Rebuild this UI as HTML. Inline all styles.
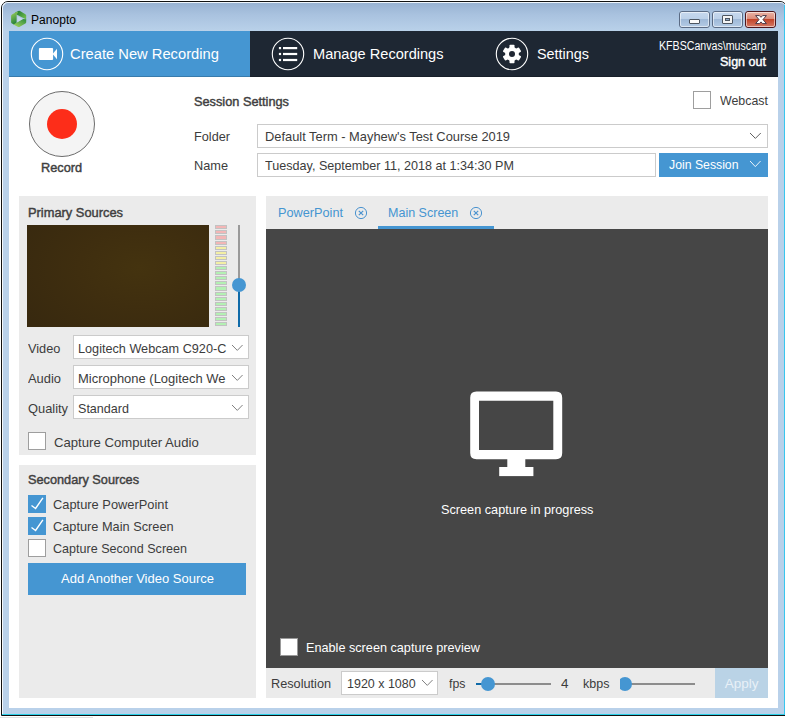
<!DOCTYPE html>
<html>
<head>
<meta charset="utf-8">
<title>Panopto</title>
<style>
html,body{margin:0;padding:0;}
body{width:785px;height:718px;overflow:hidden;background:#fff;position:relative;font-family:"Liberation Sans",sans-serif;}
.a{position:absolute;box-sizing:border-box;}
.t{position:absolute;white-space:nowrap;line-height:1;transform-origin:0 50%;font-family:"Liberation Sans",sans-serif;}
/* window frame */
#frame{left:1px;top:1px;width:786px;height:715px;border:1px solid #111;border-radius:7px 7px 0 0;background:#b9d1ea;}
#frameL{left:2px;top:8px;width:1px;height:706px;background:#f4f8fc;}
#navsh{left:9px;top:76px;width:769px;height:1px;background:rgba(0,0,0,.18);}
.b2{border-color:#b4b4b4;}
#frameglow{left:2px;top:2px;width:784px;height:30px;border-radius:6px 6px 0 0;background:linear-gradient(#98b2d2 0%,#a9c2df 40%,#bad2ea 100%);border-top:1px solid #eef4fb;border-left:1px solid #eef4fb;}
#cyan{left:2px;top:714px;width:783px;height:1px;background:#2ad0e8;}
#cyanR{left:783.7px;top:5px;width:1.3px;height:710px;background:#38c6ee;}
#content{left:9px;top:31px;width:769px;height:677px;background:#fff;}
#under{left:0;top:716px;width:785px;height:2px;background:#fff;}
#under2{left:0;top:716.5px;width:93px;height:1.5px;background:#e2e2e2;}
/* nav */
#nav{left:9px;top:31px;width:769px;height:46px;background:#1e2733;}
#navact{left:9px;top:31px;width:241px;height:46px;background:#4596d2;}
.circ{border:1.5px solid #fff;border-radius:50%;width:33px;height:33px;}
/* panels */
.panel{background:#ebebeb;}
.box{background:#fff;border:1px solid #cbcbcb;}
.cb{background:#fff;border:1px solid #9e9e9e;width:18px;height:18px;}
.cbc{background:#4596d2;border:1px solid #4596d2;width:18px;height:18px;}
.btn{background:#4596d2;}

.wb{width:31px;height:17px;border-radius:3px;border:1px solid #5b6b84;}
.wbi{position:absolute;left:0;top:0;right:0;bottom:0;border-radius:2px;border:1px solid rgba(255,255,255,.55);}
.wbn{background:linear-gradient(#c6d8ee 0%,#bcd0e8 47%,#9fb9d8 50%,#b4cbe5 100%);}
.wbc{border-color:#4e161c;background:linear-gradient(#eab3a5 0%,#dc8b79 47%,#c2452a 50%,#d47a66 100%);}
#ttl{left:31.0px;top:14.00px;font-size:12px;font-weight:400;color:#000;letter-spacing:0.047px}
#n1{left:70.4px;top:45.85px;font-size:15.3px;font-weight:400;color:#fff;letter-spacing:0.000px;transform:scaleX(0.9622)}
#n2{left:312.5px;top:45.85px;font-size:15.3px;font-weight:400;color:#fff;letter-spacing:0.000px;transform:scaleX(0.9532)}
#n3{left:537.0px;top:45.85px;font-size:15.3px;font-weight:400;color:#fff;letter-spacing:0.000px;transform:scaleX(0.9406)}
#usr{left:659.0px;top:40.00px;font-size:12px;font-weight:400;color:#fff;letter-spacing:0.000px;transform:scaleX(0.8856)}
#so{left:720.0px;top:55.00px;font-size:13px;font-weight:400;color:#fff;letter-spacing:0.000px;-webkit-text-stroke:0.45px #fff;transform:scaleX(0.9643)}
#rec{left:41.3px;top:160.75px;font-size:13.5px;font-weight:400;color:#404040;letter-spacing:0.000px;-webkit-text-stroke:0.45px #404040;transform:scaleX(0.9441)}
#ss{left:194.0px;top:94.75px;font-size:13.5px;font-weight:400;color:#404040;letter-spacing:0.000px;-webkit-text-stroke:0.45px #404040;transform:scaleX(0.9447)}
#fo{left:194.0px;top:129.75px;font-size:13.5px;font-weight:400;color:#3c3c3c;letter-spacing:0.000px;transform:scaleX(0.9408)}
#na{left:194.0px;top:158.75px;font-size:13.5px;font-weight:400;color:#3c3c3c;letter-spacing:0.000px;transform:scaleX(0.9440)}
#fov{left:265.0px;top:129.75px;font-size:13.5px;font-weight:400;color:#3c3c3c;letter-spacing:0.000px;transform:scaleX(0.9526)}
#nmv{left:265.0px;top:158.75px;font-size:13.5px;font-weight:400;color:#3c3c3c;letter-spacing:0.000px;transform:scaleX(0.9329)}
#wc{left:720.0px;top:93.75px;font-size:13.5px;font-weight:400;color:#3c3c3c;letter-spacing:0.000px;transform:scaleX(0.9181)}
#js{left:669.0px;top:157.75px;font-size:13.5px;font-weight:400;color:#fff;letter-spacing:0.000px;transform:scaleX(0.9079)}
#ps{left:28.0px;top:205.75px;font-size:13.5px;font-weight:400;color:#404040;letter-spacing:0.000px;-webkit-text-stroke:0.45px #404040;transform:scaleX(0.9521)}
#vi{left:28.4px;top:341.75px;font-size:13.5px;font-weight:400;color:#3c3c3c;letter-spacing:0.000px;transform:scaleX(0.9447)}
#au{left:28.4px;top:371.75px;font-size:13.5px;font-weight:400;color:#3c3c3c;letter-spacing:0.000px;transform:scaleX(0.9557)}
#qu{left:28.4px;top:401.75px;font-size:13.5px;font-weight:400;color:#3c3c3c;letter-spacing:0.000px;transform:scaleX(0.9517)}
#viv{left:78.0px;top:341.75px;font-size:13.5px;font-weight:400;color:#3c3c3c;letter-spacing:0.000px;transform:scaleX(0.9381)}
#auv{left:78.0px;top:371.75px;font-size:13.5px;font-weight:400;color:#3c3c3c;letter-spacing:0.000px;transform:scaleX(0.9603)}
#quv{left:78.0px;top:401.75px;font-size:13.5px;font-weight:400;color:#3c3c3c;letter-spacing:0.000px;transform:scaleX(0.9307)}
#cca{left:53.5px;top:435.75px;font-size:13.5px;font-weight:400;color:#3c3c3c;letter-spacing:0.000px;transform:scaleX(0.9738)}
#sec{left:28.0px;top:472.75px;font-size:13.5px;font-weight:400;color:#404040;letter-spacing:0.000px;-webkit-text-stroke:0.45px #404040;transform:scaleX(0.9421)}
#c1{left:53.4px;top:497.75px;font-size:13.5px;font-weight:400;color:#3c3c3c;letter-spacing:0.000px;transform:scaleX(0.9526)}
#c2{left:53.4px;top:519.75px;font-size:13.5px;font-weight:400;color:#3c3c3c;letter-spacing:0.000px;transform:scaleX(0.9453)}
#c3{left:53.4px;top:541.75px;font-size:13.5px;font-weight:400;color:#3c3c3c;letter-spacing:0.000px;transform:scaleX(0.9300)}
#add{left:60.5px;top:571.75px;font-size:13.5px;font-weight:400;color:#fff;letter-spacing:0.000px;transform:scaleX(0.9630)}
#t1{left:278.0px;top:205.75px;font-size:13.5px;font-weight:400;color:#4595d1;letter-spacing:0.000px;transform:scaleX(0.9414)}
#t2{left:388.4px;top:205.75px;font-size:13.5px;font-weight:400;color:#4595d1;letter-spacing:0.000px;transform:scaleX(0.9275)}
#scp{left:440.6px;top:502.75px;font-size:13.5px;font-weight:400;color:#fff;letter-spacing:0.000px;transform:scaleX(0.9402)}
#esc{left:305.5px;top:640.75px;font-size:13.5px;font-weight:400;color:#fff;letter-spacing:0.000px;transform:scaleX(0.9382)}
#res{left:270.7px;top:676.75px;font-size:13.5px;font-weight:400;color:#3c3c3c;letter-spacing:0.000px;transform:scaleX(0.9421)}
#rsv{left:347.0px;top:676.75px;font-size:13.5px;font-weight:400;color:#3c3c3c;letter-spacing:0.000px;transform:scaleX(0.9243)}
#fps{left:449.0px;top:676.75px;font-size:13.5px;font-weight:400;color:#3c3c3c;letter-spacing:0.000px;transform:scaleX(0.9103)}
#f4{left:560.5px;top:676.75px;font-size:13.5px;font-weight:400;color:#3c3c3c;letter-spacing:0.000px;transform:scaleX(0.9979)}
#kb{left:583.2px;top:676.75px;font-size:13.5px;font-weight:400;color:#3c3c3c;letter-spacing:0.000px;transform:scaleX(0.9253)}
#ap{left:724.8px;top:676.75px;font-size:13.5px;font-weight:400;color:#e8f0f7;letter-spacing:0.005px}
</style>
</head>
<body>
<div class="a" id="under"></div>
<div class="a" id="under2"></div>
<div class="a" id="frame"></div>
<div class="a" id="frameglow"></div>
<div class="a" id="cyan"></div>
<div class="a" id="cyanR"></div>
<div class="a" id="content"></div>
<div class="a" id="nav"></div>
<div class="a" id="navact"></div>
<div class="a" id="navsh"></div>
<div class="a" id="frameL"></div>

<!-- record -->
<div class="a" style="left:29px;top:91px;width:66px;height:66px;border-radius:50%;border:1.7px solid #6c6c6c;background:#f4f4f4"></div>
<div class="a" style="left:47px;top:109px;width:30px;height:30px;border-radius:50%;background:#fd2d19"></div>

<!-- session settings -->
<div class="a cb" style="left:693px;top:91px"></div>
<div class="a box" style="left:257px;top:124px;width:511px;height:23.5px"></div>
<div class="a box" style="left:257px;top:153px;width:399px;height:24px"></div>
<div class="a btn" style="left:659px;top:153px;width:109px;height:24px"></div>

<!-- primary sources -->
<div class="a panel" style="left:19px;top:196px;width:237px;height:259px"></div>
<div class="a" style="left:27px;top:225px;width:182px;height:102px;background:radial-gradient(ellipse 75% 85% at 62% 42%,#44330f 0%,#3f2e0f 45%,#38290f 100%)"></div>
<div class="a box b2" style="left:73px;top:335px;width:176px;height:24px"></div>
<div class="a box b2" style="left:73px;top:365px;width:176px;height:24px"></div>
<div class="a box b2" style="left:73px;top:395px;width:176px;height:24px"></div>
<div class="a cb" style="left:28px;top:432px"></div>

<!-- secondary sources -->
<div class="a panel" style="left:19px;top:465px;width:237px;height:233px"></div>
<div class="a cbc" style="left:28px;top:495px"></div>
<div class="a cbc" style="left:28px;top:517px"></div>
<div class="a cb" style="left:28px;top:539px"></div>
<div class="a btn" style="left:28px;top:563px;width:218px;height:32px"></div>

<!-- right panel -->
<div class="a panel" style="left:266px;top:196px;width:502px;height:502px"></div>
<div class="a" style="left:266px;top:229px;width:502px;height:439px;background:#464646"></div>
<div class="a" style="left:378px;top:226px;width:116px;height:3px;background:#4596d2"></div>
<div class="a" style="left:280px;top:638px;width:18px;height:18px;background:#fff;border:1px solid #999"></div>
<div class="a box b2" style="left:341px;top:671px;width:97px;height:24px"></div>
<div class="a" style="left:715px;top:668px;width:53px;height:30px;background:#bad3e6"></div>

<!--DETAIL-->
<svg class="a" style="left:10px;top:10px" width="18" height="18" viewBox="10 10 18 18">
<defs>
<linearGradient id="lg1" x1="0" y1="0" x2="1" y2="0.6"><stop offset="0" stop-color="#15702f"/><stop offset="1" stop-color="#6ab84a"/></linearGradient>
<linearGradient id="lg2" x1="0" y1="0" x2="0.3" y2="1"><stop offset="0" stop-color="#9ed05a"/><stop offset="1" stop-color="#23803a"/></linearGradient>
<linearGradient id="lg3" x1="0" y1="1" x2="1" y2="0"><stop offset="0" stop-color="#a8d860"/><stop offset="1" stop-color="#2c8a3e"/></linearGradient>
</defs>
<path d="M15.2 12.6 L18.4 10.9 Q19.2 10.6 20 11 L25.4 14.2 Q26.2 14.8 26.2 15.6 L26.2 19.6 L16.6 14.4 Z" fill="url(#lg1)"/>
<path d="M16.8 11.8 L12 14.4 Q11.1 15 11.1 15.9 L11.1 22 Q11.1 23 12 23.5 L14.6 25 L16.6 22.6 L16.6 14.6 L18.2 12.4 Z" fill="url(#lg2)"/>
<path d="M13.4 24.4 L18.2 26.9 Q19 27.2 19.8 26.8 L25.4 23.6 Q26.2 23 26.2 22.2 L26.2 19.2 L23 19 L16.6 22.8 Z" fill="url(#lg3)"/>
<path d="M17.4 16 L22.8 19 L17.4 22 Z" fill="#c4d8ea"/>
</svg>
<div class="a wb wbn" style="left:679px;top:11px"><div class="wbi"></div></div><div class="a wb wbn" style="left:712px;top:11px"><div class="wbi"></div></div><div class="a wb wbc" style="left:745px;top:11px"><div class="wbi"></div></div>
<div class="a" style="left:689px;top:19px;width:11px;height:5px;background:#fafafa;border:1px solid #4d5560;border-radius:1px"></div>
<div class="a" style="left:722px;top:15px;width:11px;height:9px;background:#f4f4f4;border:1px solid #4d5560;border-radius:1px"></div>
<div class="a" style="left:725px;top:18px;width:5px;height:3px;background:#8fa9c8;border:1px solid #4d5560"></div>
<svg class="a" style="left:753px;top:13px" width="16" height="13" viewBox="0 0 16 13">
<path d="M2.6 2.6 L6.4 2.6 L8 4.3 L9.6 2.6 L13.4 2.6 L10 6.6 L13.4 10.6 L9.6 10.6 L8 8.9 L6.4 10.6 L2.6 10.6 L6 6.6 Z" fill="#fff" stroke="#4a3a48" stroke-width="1" stroke-linejoin="round"/>
</svg>
<svg class="a" style="left:30px;top:37px" width="34" height="34" viewBox="0 0 34 34">
<circle cx="17" cy="17" r="15.7" fill="none" stroke="#fff" stroke-width="1.1"/>
<rect x="8.9" y="10.9" width="14.2" height="12.2" rx="1" fill="#fff"/>
<path d="M22.6 17 L27 11.7 L27 22.3 Z" fill="#fff"/>
</svg>
<svg class="a" style="left:271px;top:37px" width="34" height="34" viewBox="0 0 34 34">
<circle cx="17" cy="17" r="15.7" fill="none" stroke="#fff" stroke-width="1.1"/>
<g fill="#fff">
<rect x="7.9" y="10" width="2.2" height="2.2"/><rect x="12" y="10" width="14.2" height="2.2"/>
<rect x="7.9" y="15.9" width="2.2" height="2.2"/><rect x="12" y="15.9" width="14.2" height="2.2"/>
<rect x="7.9" y="21.9" width="2.2" height="2.2"/><rect x="12" y="21.9" width="14.2" height="2.2"/>
</g></svg>
<svg class="a" style="left:495px;top:37px" width="34" height="34" viewBox="0 0 34 34">
<circle cx="17" cy="17" r="15.7" fill="none" stroke="#fff" stroke-width="1.1"/>
<g transform="translate(17 17)" fill="#fff"><rect x="-2.5" y="-9.3" width="5" height="5" rx="0.8" transform="rotate(0)"/><rect x="-2.5" y="-9.3" width="5" height="5" rx="0.8" transform="rotate(60)"/><rect x="-2.5" y="-9.3" width="5" height="5" rx="0.8" transform="rotate(120)"/><rect x="-2.5" y="-9.3" width="5" height="5" rx="0.8" transform="rotate(180)"/><rect x="-2.5" y="-9.3" width="5" height="5" rx="0.8" transform="rotate(240)"/><rect x="-2.5" y="-9.3" width="5" height="5" rx="0.8" transform="rotate(300)"/><circle r="6.9"/></g>
<circle cx="17" cy="17" r="3" fill="#1f2733"/>
</svg>
<div class="a" style="left:215px;top:225.2px;width:12px;height:4.2px;background:#f3b6b6;border:0.6px solid #c2c2c2"></div><div class="a" style="left:215px;top:230.3px;width:12px;height:4.2px;background:#f3b6b6;border:0.6px solid #c2c2c2"></div><div class="a" style="left:215px;top:235.4px;width:12px;height:4.2px;background:#f3b6b6;border:0.6px solid #c2c2c2"></div><div class="a" style="left:215px;top:240.5px;width:12px;height:4.2px;background:#f3b6b6;border:0.6px solid #c2c2c2"></div><div class="a" style="left:215px;top:245.6px;width:12px;height:4.2px;background:#f3efa4;border:0.6px solid #c2c2c2"></div><div class="a" style="left:215px;top:250.7px;width:12px;height:4.2px;background:#f3efa4;border:0.6px solid #c2c2c2"></div><div class="a" style="left:215px;top:255.8px;width:12px;height:4.2px;background:#f3efa4;border:0.6px solid #c2c2c2"></div><div class="a" style="left:215px;top:260.9px;width:12px;height:4.2px;background:#f3efa4;border:0.6px solid #c2c2c2"></div><div class="a" style="left:215px;top:266.0px;width:12px;height:4.2px;background:#b3f0b3;border:0.6px solid #c2c2c2"></div><div class="a" style="left:215px;top:271.1px;width:12px;height:4.2px;background:#b3f0b3;border:0.6px solid #c2c2c2"></div><div class="a" style="left:215px;top:276.2px;width:12px;height:4.2px;background:#b3f0b3;border:0.6px solid #c2c2c2"></div><div class="a" style="left:215px;top:281.3px;width:12px;height:4.2px;background:#b3f0b3;border:0.6px solid #c2c2c2"></div><div class="a" style="left:215px;top:286.4px;width:12px;height:4.2px;background:#b3f0b3;border:0.6px solid #c2c2c2"></div><div class="a" style="left:215px;top:291.5px;width:12px;height:4.2px;background:#b3f0b3;border:0.6px solid #c2c2c2"></div><div class="a" style="left:215px;top:296.6px;width:12px;height:4.2px;background:#b3f0b3;border:0.6px solid #c2c2c2"></div><div class="a" style="left:215px;top:301.7px;width:12px;height:4.2px;background:#b3f0b3;border:0.6px solid #c2c2c2"></div><div class="a" style="left:215px;top:306.8px;width:12px;height:4.2px;background:#b3f0b3;border:0.6px solid #c2c2c2"></div><div class="a" style="left:215px;top:311.9px;width:12px;height:4.2px;background:#b3f0b3;border:0.6px solid #c2c2c2"></div><div class="a" style="left:215px;top:317.0px;width:12px;height:4.2px;background:#b3f0b3;border:0.6px solid #c2c2c2"></div><div class="a" style="left:215px;top:322.1px;width:12px;height:4.2px;background:#b3f0b3;border:0.6px solid #c2c2c2"></div>
<div class="a" style="left:238px;top:225px;width:2px;height:60px;background:#9a9a9a"></div>
<div class="a" style="left:238px;top:285px;width:2px;height:42px;background:#0f6aa8"></div>
<div class="a" style="left:232px;top:278px;width:14px;height:14px;border-radius:50%;background:#4596d2"></div>
<svg class="a" style="left:28px;top:495px" width="18" height="18" viewBox="0 0 18 18"><path d="M3.5 10.5 L7.6 13.5 L14.9 2.8" fill="none" stroke="#fff" stroke-width="1.4"/></svg><svg class="a" style="left:28px;top:517px" width="18" height="18" viewBox="0 0 18 18"><path d="M3.5 10.5 L7.6 13.5 L14.9 2.8" fill="none" stroke="#fff" stroke-width="1.4"/></svg>
<svg class="a" style="left:353.8px;top:205.8px" width="14" height="14" viewBox="-7 -7 14 14"><circle r="5.6" fill="none" stroke="#4b93cf" stroke-width="1"/><path d="M-2.2 -2.2 L2.2 2.2 M2.2 -2.2 L-2.2 2.2" stroke="#4b93cf" stroke-width="1.2" fill="none"/></svg><svg class="a" style="left:469.2px;top:205.8px" width="14" height="14" viewBox="-7 -7 14 14"><circle r="5.6" fill="none" stroke="#4b93cf" stroke-width="1"/><path d="M-2.2 -2.2 L2.2 2.2 M2.2 -2.2 L-2.2 2.2" stroke="#4b93cf" stroke-width="1.2" fill="none"/></svg>
<svg class="a" style="left:466px;top:388px" width="100" height="92" viewBox="466 388 100 92">
<path fill-rule="evenodd" fill="#fff" d="M476.5 391.5 H556 Q562.2 391.5 562.2 397.7 V453 Q562.2 459.2 556 459.2 H476.5 Q470.2 459.2 470.2 453 V397.7 Q470.2 391.5 476.5 391.5 Z M479 400.7 V450 H553.3 V400.7 Z"/>
<rect x="507.3" y="459" width="18" height="8.2" fill="#fff"/>
<rect x="499.2" y="467" width="34.2" height="9.1" fill="#fff"/>
</svg>
<div class="a" style="left:476px;top:683px;width:12px;height:2px;background:#0f6aa8"></div>
<div class="a" style="left:488px;top:683px;width:63px;height:2px;background:#8c8c8c"></div>
<div class="a" style="left:480.8px;top:677px;width:14.2px;height:14px;border-radius:50%;background:#4596d2"></div>
<div class="a" style="left:625px;top:683px;width:70px;height:2px;background:#8c8c8c"></div>
<div class="a" style="left:620px;top:677px;width:13px;height:14px;overflow:hidden"><div class="a" style="left:-2px;top:0;width:14.2px;height:14px;border-radius:50%;background:#4596d2"></div></div>
<svg class="a" style="left:749.3px;top:132.1px" width="12.8" height="7.4" viewBox="-1 -1 12.8 7.4"><path d="M0 0 L5.4 5.4 L10.8 0" fill="none" stroke="#5e5e5e" stroke-width="1.0" stroke-opacity="1"/></svg>
<svg class="a" style="left:749px;top:160.2px" width="12.6" height="7.6" viewBox="-1 -1 12.6 7.6"><path d="M0 0 L5.3 5.6 L10.6 0" fill="none" stroke="#fff" stroke-width="1.0" stroke-opacity="0.9"/></svg>
<svg class="a" style="left:230.8px;top:343.8px" width="12.6" height="7.4" viewBox="-1 -1 12.6 7.4"><path d="M0 0 L5.3 5.4 L10.6 0" fill="none" stroke="#808080" stroke-width="1.0" stroke-opacity="1"/></svg>
<svg class="a" style="left:230.8px;top:373.9px" width="12.6" height="7.4" viewBox="-1 -1 12.6 7.4"><path d="M0 0 L5.3 5.4 L10.6 0" fill="none" stroke="#808080" stroke-width="1.0" stroke-opacity="1"/></svg>
<svg class="a" style="left:230.8px;top:403.8px" width="12.6" height="7.4" viewBox="-1 -1 12.6 7.4"><path d="M0 0 L5.3 5.4 L10.6 0" fill="none" stroke="#808080" stroke-width="1.0" stroke-opacity="1"/></svg>
<svg class="a" style="left:420.7px;top:678.9px" width="12.6" height="7.4" viewBox="-1 -1 12.6 7.4"><path d="M0 0 L5.3 5.4 L10.6 0" fill="none" stroke="#808080" stroke-width="1.0" stroke-opacity="1"/></svg>
<!--/DETAIL-->
<span class="t" id="ttl">Panopto</span>
<span class="t" id="n1">Create New Recording</span>
<span class="t" id="n2">Manage Recordings</span>
<span class="t" id="n3">Settings</span>
<span class="t" id="usr">KFBSCanvas\muscarp</span>
<span class="t" id="so">Sign out</span>
<span class="t" id="rec">Record</span>
<span class="t" id="ss">Session Settings</span>
<span class="t" id="fo">Folder</span>
<span class="t" id="na">Name</span>
<span class="t" id="fov">Default Term - Mayhew's Test Course 2019</span>
<span class="t" id="nmv">Tuesday, September 11, 2018 at 1:34:30 PM</span>
<span class="t" id="wc">Webcast</span>
<span class="t" id="js">Join Session</span>
<span class="t" id="ps">Primary Sources</span>
<span class="t" id="vi">Video</span>
<span class="t" id="au">Audio</span>
<span class="t" id="qu">Quality</span>
<span class="t" id="viv">Logitech Webcam C920-C</span>
<span class="t" id="auv">Microphone (Logitech We</span>
<span class="t" id="quv">Standard</span>
<span class="t" id="cca">Capture Computer Audio</span>
<span class="t" id="sec">Secondary Sources</span>
<span class="t" id="c1">Capture PowerPoint</span>
<span class="t" id="c2">Capture Main Screen</span>
<span class="t" id="c3">Capture Second Screen</span>
<span class="t" id="add">Add Another Video Source</span>
<span class="t" id="t1">PowerPoint</span>
<span class="t" id="t2">Main Screen</span>
<span class="t" id="scp">Screen capture in progress</span>
<span class="t" id="esc">Enable screen capture preview</span>
<span class="t" id="res">Resolution</span>
<span class="t" id="rsv">1920 x 1080</span>
<span class="t" id="fps">fps</span>
<span class="t" id="f4">4</span>
<span class="t" id="kb">kbps</span>
<span class="t" id="ap">Apply</span>
</body>
</html>
